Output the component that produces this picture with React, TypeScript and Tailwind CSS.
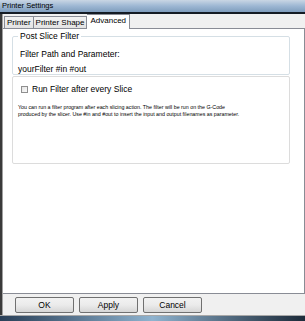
export default function App() {
  return (
    <div
      className="relative flex h-[321px] w-[305px] flex-col overflow-hidden bg-[#f0f0f0] text-black"
      style={{ fontFamily: '"Liberation Sans", Arial, sans-serif' }}
    >
      {/* title bar */}
      <div className="flex h-[12px] items-center bg-gradient-to-b from-[#c9d6e4] via-[#9db7d3] to-[#7f9dbd] pl-[2px] text-[7.5px] leading-none">
        Printer Settings
      </div>
      <div className="h-[2px] bg-[#141b24]" />

      <div className="flex flex-1 flex-row">
        {/* left window frame */}
        <div className="w-[2px] bg-[#3a3a3a]" />
        <div className="w-[1px] bg-[#a0a0a0]" />

        <div className="flex flex-1 flex-col">
          {/* tabs */}
          <div className="flex h-[14px] items-end pl-[1px]">
            <div className="flex h-[12px] items-center border border-b-0 border-[#898c95] bg-gradient-to-b from-[#f2f2f2] to-[#e3e3e3] px-[2px] text-[8px] leading-none">
              Printer
            </div>
            <div className="flex h-[12px] items-center border border-b-0 border-l-0 border-[#898c95] bg-gradient-to-b from-[#f2f2f2] to-[#e3e3e3] px-[2px] text-[8px] leading-none">
              Printer Shape
            </div>
            <div className="relative z-10 -mb-[1px] flex h-[15px] items-center border border-b-0 border-l-0 border-[#898c95] bg-white px-[3px] pb-[2px] text-[8px] leading-none">
              Advanced
            </div>
          </div>

          {/* tab page */}
          <div className="flex h-[266px] flex-col border border-l-0 border-[#898c95] bg-white pl-[9px] pr-[14px] pt-[3px]">
            <fieldset className="h-[43px] rounded-[2px] border border-[#d5dfe5] px-[5px] pt-0">
              <legend className="px-[2px] text-[8.5px] leading-[9px]">Post Slice Filter</legend>
              <div className="mt-[9px] pl-[2px] text-[8.5px] leading-[9px]">Filter Path and Parameter:</div>
              <div className="mt-[6px] text-[8.5px] leading-[9px]">yourFilter #in #out</div>
            </fieldset>

            <div className="mt-[1px] flex h-[88px] flex-col rounded-[2px] border border-[#dcdcdc] px-[5px] pt-[8px]">
              <div className="flex items-center gap-[4px] pl-[3px]">
                <div className="h-[7px] w-[7px] border border-[#8f8f8f] bg-gradient-to-br from-[#e4e4e4] to-[#fafafa]" />
                <span className="text-[8.5px] leading-[9px]">Run Filter after every Slice</span>
              </div>
              <p className="mt-[10px] text-[5.3px] leading-[7px]">
                You can run a filter program after each slicing action. The filter will be run on the G-Code
                <br />
                produced by the slicer. Use #in and #out to insert the input and output filenames as parameter.
              </p>
            </div>
          </div>

          {/* buttons */}
          <div className="flex h-[21px] items-start gap-[5px] pl-[12px] pt-[3px]">
            {["OK", "Apply", "Cancel"].map((t) => (
              <div
                key={t}
                className="flex h-[16px] w-[59px] items-center justify-center rounded-[2px] border border-[#707070] bg-gradient-to-b from-[#f2f2f2] via-[#ebebeb] to-[#d6d6d6] text-[8.5px] leading-none"
              >
                {t}
              </div>
            ))}
          </div>
        </div>
      </div>

      {/* window behind */}
      <div className="h-[1px] bg-[#a8a8a8]" />
      <div className="h-[5px] bg-gradient-to-r from-[#2a4058] via-[#8fb3cf] to-[#1d2b3a]" />
    </div>
  );
}
